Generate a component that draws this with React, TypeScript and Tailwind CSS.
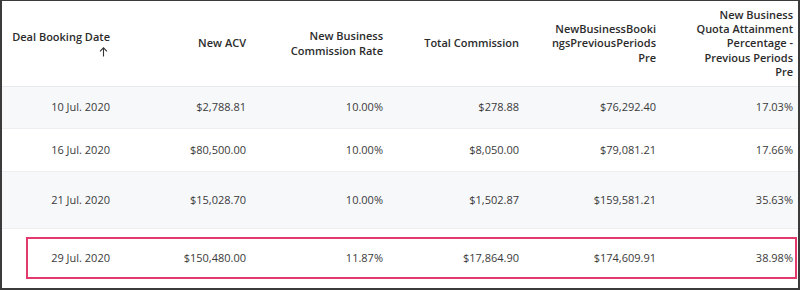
import React from "react";

type Row = {
  date: string;
  acv: string;
  rate: string;
  total: string;
  prev: string;
  quota: string;
};

const rows: Row[] = [
  { date: "10 Jul. 2020", acv: "$2,788.81", rate: "10.00%", total: "$278.88", prev: "$76,292.40", quota: "17.03%" },
  { date: "16 Jul. 2020", acv: "$80,500.00", rate: "10.00%", total: "$8,050.00", prev: "$79,081.21", quota: "17.66%" },
  { date: "21 Jul. 2020", acv: "$15,028.70", rate: "10.00%", total: "$1,502.87", prev: "$159,581.21", quota: "35.63%" },
];

const highlighted: Row = {
  date: "29 Jul. 2020",
  acv: "$150,480.00",
  rate: "11.87%",
  total: "$17,864.90",
  prev: "$174,609.91",
  quota: "38.98%",
};

function Cells({ row }: { row: Row }) {
  const vals = [row.date, row.acv, row.rate, row.total, row.prev, row.quota];
  return (
    <>
      {vals.map((v, i) => (
        <div key={i} className="flex items-center justify-end whitespace-nowrap">
          {v}
        </div>
      ))}
    </>
  );
}

export default function App() {
  return (
    <div
      className="w-[800px] h-[290px] bg-white border-t border-x-2 border-b-2 border-[#3b3b3b] overflow-hidden text-[11px] text-[#3a3a3a]"
      style={{ fontFamily: '"Open Sans", "Liberation Sans", sans-serif' }}
    >
      {/* header */}
      <div className="grid grid-cols-[108px_136px_137px_136px_137px_137px] h-[86px] border-b border-[#e6e8eb] font-semibold text-[#2b2b2b] leading-[14.3px] text-right">
        <div className="flex flex-col items-end justify-center">
          <span className="whitespace-nowrap">Deal Booking Date</span>
          <svg width="9" height="10" viewBox="0 0 9 10" className="mt-[2px] mr-[2px]" fill="none" stroke="#333" strokeWidth="1.1">
            <path d="M4.5 9.5V1M1 4.3l3.5-3.5L8 4.3" />
          </svg>
        </div>
        <div className="flex items-center justify-end">New ACV</div>
        <div className="flex items-center justify-end">
          New Business
          <br />
          Commission Rate
        </div>
        <div className="flex items-center justify-end whitespace-nowrap">Total Commission</div>
        <div className="flex items-center justify-end">
          NewBusinessBooki
          <br />
          ngsPreviousPeriods
          <br />
          Pre
        </div>
        <div className="flex items-center justify-end">
          New Business
          <br />
          Quota Attainment
          <br />
          Percentage -
          <br />
          Previous Periods
          <br />
          Pre
        </div>
      </div>

      {/* rows */}
      <div className="grid grid-cols-[108px_136px_137px_136px_137px_137px] h-[42px] bg-[#f7f8fa] border-b border-[#eceef1]">
        <Cells row={rows[0]} />
      </div>
      <div className="grid grid-cols-[108px_136px_137px_136px_137px_137px] h-[43px] bg-white border-b border-[#eceef1]">
        <Cells row={rows[1]} />
      </div>
      <div className="grid grid-cols-[108px_136px_137px_136px_137px_137px] h-[57px] bg-[#f7f8fa] border-b border-[#eceef1]">
        <Cells row={rows[2]} />
      </div>

      {/* highlighted row */}
      <div className="pl-6 pr-px pt-2">
        <div className="grid grid-cols-[82px_136px_137px_136px_137px_137px] h-[42px] border-2 border-[#e23a6c]">
          <Cells row={highlighted} />
        </div>
      </div>
    </div>
  );
}
